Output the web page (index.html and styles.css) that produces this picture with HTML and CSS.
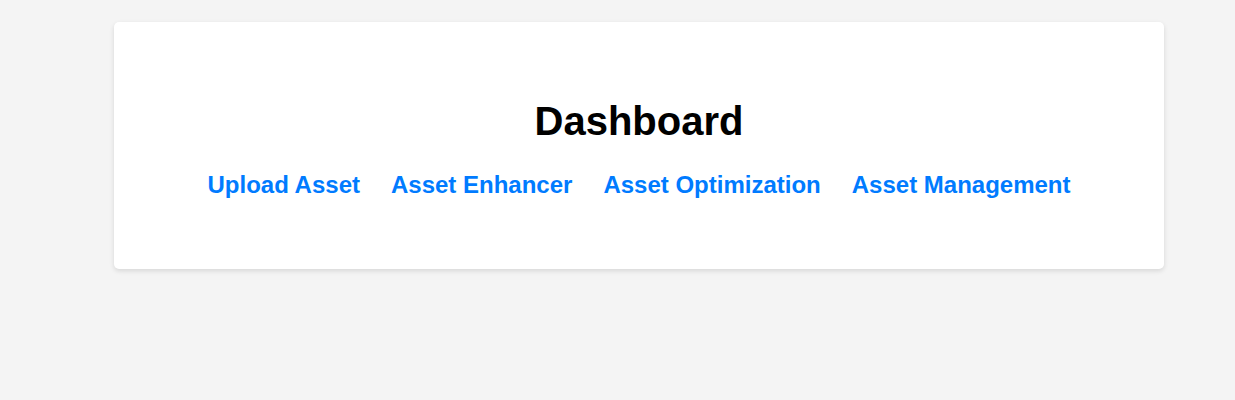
FILE: index.html
```html
<!DOCTYPE html>
<html lang="en">
<head>
<meta charset="utf-8">
<title>Dashboard</title>
<link rel="stylesheet" href="styles.css">
</head>
<body>
<main class="card">
  <h1 class="title">Dashboard</h1>
  <nav class="links">
    <a href="#" class="link">Upload Asset</a>
    <a href="#" class="link">Asset Enhancer</a>
    <a href="#" class="link">Asset Optimization</a>
    <a href="#" class="link">Asset Management</a>
  </nav>
</main>
</body>
</html>
```
FILE: styles.css
```css
html, body {
  margin: 0;
  padding: 0;
}
body {
  background: #f4f4f4;
  font-family: "Liberation Sans", Arial, sans-serif;
  padding: 22px 71px 0 114px;
  min-height: 400px;
  box-sizing: border-box;
}
.card {
  background: #fff;
  border-radius: 5px;
  box-shadow: 0 2px 5px rgba(0, 0, 0, 0.12);
  padding: 77px 20px 70px;
  display: flex;
  flex-direction: column;
  align-items: center;
}
.title {
  margin: 0 0 27px;
  font-size: 40px;
  font-weight: bold;
  color: #000;
}
.links {
  display: flex;
  gap: 31px;
  justify-content: center;
}
.link {
  color: #007bff;
  text-decoration: none;
  font-weight: bold;
  font-size: 24px;
}
```
